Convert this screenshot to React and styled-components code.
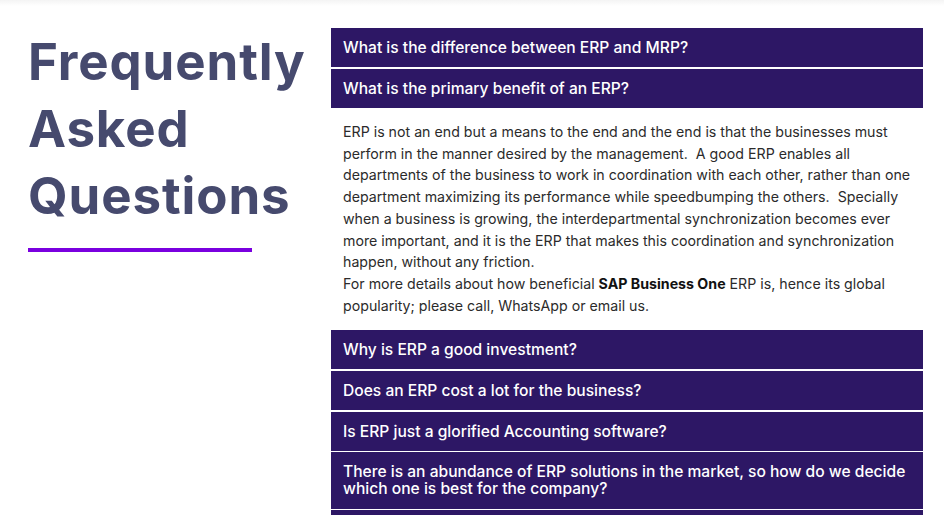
import React from "react";
import styled, { createGlobalStyle } from "styled-components";

const GlobalStyle = createGlobalStyle`
  html, body { margin: 0; padding: 0; background: #ffffff; }
  body { font-family: Inter, "Noto Sans", sans-serif; }
  * { box-sizing: border-box; }
`;

const Page = styled.div`
  width: 944px;
  height: 515px;
  overflow: hidden;
  background: linear-gradient(to bottom, #f4f4f4 0px, #ffffff 6px);
  display: flex;
  align-items: flex-start;
  padding: 28px 0 0 28px;
`;

const Intro = styled.div`
  width: 303px;
  flex: none;
`;

const Title = styled.h2`
  margin: 0;
  font-family: Inter, sans-serif;
  font-weight: 700;
  font-size: 51px;
  line-height: 67px;
  letter-spacing: 0.9px;
  color: #464a6e;
`;

const Rule = styled.div`
  margin-top: 19px;
  width: 224px;
  height: 4px;
  background: #7a00df;
`;

const Accordion = styled.div`
  width: 592px;
  flex: none;
  display: flex;
  flex-direction: column;
`;

const Item = styled.div`
  margin-bottom: 1.4px;
`;

const Question = styled.div`
  background: #2d1765;
  color: #ffffff;
  padding: 11px 12px;
  font-family: Inter, sans-serif;
  font-weight: 500;
  font-size: 15.6px;
  line-height: 17.3px;
  letter-spacing: 0;
`;

const Answer = styled.div`
  padding: 13px 12px 12px;
  font-family: Inter, sans-serif;
  font-size: 14.2px;
  line-height: 21.75px;
  color: #2b2b2b;
  white-space: nowrap;
  letter-spacing: 0;

  strong { font-weight: 700; color: #111; }
`;

const faqs = [
  { q: "What is the difference between ERP and MRP?" },
  { q: "What is the primary benefit of an ERP?", open: true },
  { q: "Why is ERP a good investment?" },
  { q: "Does an ERP cost a lot for the business?" },
  { q: "Is ERP just a glorified Accounting software?" },
  {
    q: "There is an abundance of ERP solutions in the market, so how do we decide which one is best for the company?",
  },
  { q: "How long does it take to implement an ERP?" },
];

function AnswerBody() {
  return (
    <Answer>
      ERP is not an end but a means to the end and the end is that the businesses must
      <br />
      perform in the manner desired by the management.{"\u00a0 "}A good ERP enables all
      <br />
      departments of the business to work in coordination with each other, rather than one
      <br />
      department maximizing its performance while speedbumping the others.{"\u00a0 "}Specially
      <br />
      when a business is growing, the interdepartmental synchronization becomes ever
      <br />
      more important, and it is the ERP that makes this coordination and synchronization
      <br />
      happen, without any friction.
      <br />
      For more details about how beneficial <strong>SAP Business One</strong> ERP is, hence its global
      <br />
      popularity; please call, WhatsApp or email us.
    </Answer>
  );
}

export default function App() {
  return (
    <>
      <GlobalStyle />
      <Page>
        <Intro>
          <Title>
            Frequently
            <br />
            Asked
            <br />
            Questions
          </Title>
          <Rule />
        </Intro>
        <Accordion>
          {faqs.map((f) => (
            <Item key={f.q}>
              <Question>
                {f.q.startsWith("There is") ? (
                  <>
                    There is an abundance of ERP solutions in the market, so how do we decide
                    <br />
                    which one is best for the company?
                  </>
                ) : (
                  f.q
                )}
              </Question>
              {f.open && <AnswerBody />}
            </Item>
          ))}
        </Accordion>
      </Page>
    </>
  );
}
